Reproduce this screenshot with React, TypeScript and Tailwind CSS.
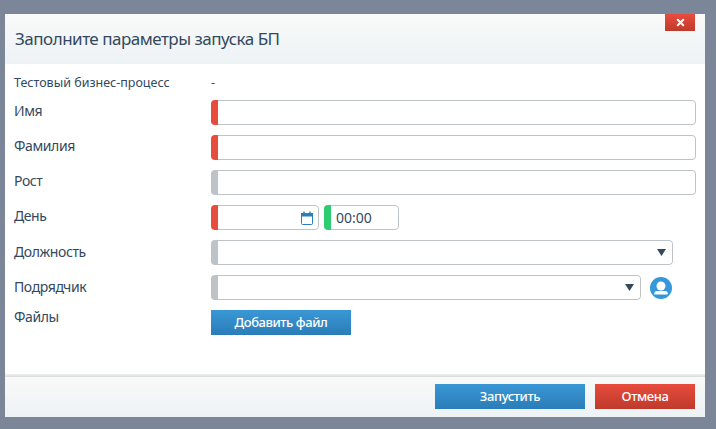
import { X } from "lucide-react";

const blue = "bg-gradient-to-b from-[#3a97d6] to-[#2a7db8]";
const red = "bg-gradient-to-b from-[#e84c3d] to-[#bf3a2b]";

const Field = ({ color, className, children }: { color: string; className: string; children?: React.ReactNode }) => (
  <div className={`flex h-[25px] rounded-[4px] bg-white overflow-hidden ${className}`}>
    <span className={`w-[7px] h-full shrink-0 ${color}`} />
    <div className="flex flex-1 items-center border border-l-0 border-[#bdc3c7] rounded-r-[4px]">{children}</div>
  </div>
);

const Row = ({ label, labelClass, children }: { label: string; labelClass?: string; children: React.ReactNode }) => (
  <div className="flex h-[25px] mb-[10px]">
    <div className={`w-[206px] shrink-0 pl-[9px] text-[14px] leading-[22px] tracking-[-0.4px] ${labelClass ?? ""}`}>{label}</div>
    {children}
  </div>
);

const Arrow = () => (
  <svg width="9" height="7" viewBox="0 0 9 7" className="ml-auto mr-[6px] shrink-0">
    <path d="M0 0h9L4.500 7z" fill="#34495e" />
  </svg>
);

export default function App() {
  return (
    <div className="h-[429px] bg-[#7b8798] pt-[14px] pl-[5px] font-['Noto_Sans','Open_Sans',sans-serif] text-[#34495e]">
      <div className="w-[700px] h-[403px] bg-white flex flex-col">
        <div className="h-[50px] shrink-0 flex items-start justify-between bg-gradient-to-b from-[#f9faf9] to-[#edf2f5] pl-[10px] pr-[10px]">
          <h1 className="text-[17px] leading-[49px] tracking-[-0.5px]">Заполните параметры запуска БП</h1>
          <button className={`w-[30px] h-[17px] flex items-center justify-center ${red}`}>
            <X size={11} strokeWidth={4.5} color="#fff" />
          </button>
        </div>

        <div className="flex-1 pt-[10px]">
          <div className="flex h-[26px] text-[12.5px] leading-[18px]">
            <div className="w-[206px] shrink-0 pl-[9px]">Тестовый бизнес-процесс</div>
            <div>-</div>
          </div>
          <Row label="Имя">
            <Field color="bg-[#e74c3c]" className="w-[485px]" />
          </Row>
          <Row label="Фамилия">
            <Field color="bg-[#e74c3c]" className="w-[485px]" />
          </Row>
          <Row label="Рост">
            <Field color="bg-[#bdc3c7]" className="w-[485px]" />
          </Row>
          <Row label="День">
            <div className="flex gap-[5px]">
              <Field color="bg-[#e74c3c]" className="w-[108px]">
                <svg width="12" height="14" viewBox="0 0 12 14" className="ml-auto mr-[5px]">
                  <rect x=".5" y="2.500" width="11" height="11" rx="1" fill="#fff" stroke="#2980b9" />
                  <rect x="0" y="2" width="12" height="3.500" fill="#2980b9" />
                  <path d="M3 .5v2.500M9 .5v2.500" stroke="#2980b9" strokeWidth="1.400" />
                </svg>
              </Field>
              <Field color="bg-[#2ecc71]" className="w-[75px]">
                <span className="pl-[5px] text-[14px]">00:00</span>
              </Field>
            </div>
          </Row>
          <Row label="Должность" labelClass="leading-[24px]">
            <Field color="bg-[#bdc3c7]" className="w-[462px]">
              <Arrow />
            </Field>
          </Row>
          <Row label="Подрядчик" labelClass="leading-[24px]">
            <Field color="bg-[#bdc3c7]" className="w-[430px]">
              <Arrow />
            </Field>
            <svg width="22" height="22" viewBox="0 0 22 22" className="ml-[9px] mt-[2px]">
              <circle cx="11" cy="11" r="11" fill="#3498db" />
              <circle cx="11" cy="9" r="4.500" fill="#fff" />
              <path d="M4.300 17.500v-1.200c0-1.300 1-2.300 2.300-2.300h8.800c1.300 0 2.300 1 2.300 2.300v1.200z" fill="#fff" />
            </svg>
          </Row>
          <div className="flex h-[25px]">
            <div className="w-[206px] shrink-0 pl-[9px] text-[14px] leading-[14px] tracking-[-0.4px]">Файлы</div>
            <button className={`w-[140px] h-[25px] text-white text-[13px] font-medium tracking-[-0.45px] ${blue}`}>Добавить файл</button>
          </div>
        </div>

        <div className="h-[3px] shrink-0 bg-gradient-to-b from-[#f0f0f0] to-[#d9dbdb]" />
        <div className="h-[40px] shrink-0 bg-gradient-to-b from-[#f9faf9] to-[#edf2f5] flex justify-end gap-[10px] pt-[7px] pr-[10px]">
          <button className={`w-[150px] h-[25px] text-white text-[13px] font-medium tracking-[-0.4px] ${blue}`}>Запустить</button>
          <button className={`w-[100px] h-[25px] text-white text-[13px] font-medium tracking-[-0.4px] ${red}`}>Отмена</button>
        </div>
      </div>
    </div>
  );
}
